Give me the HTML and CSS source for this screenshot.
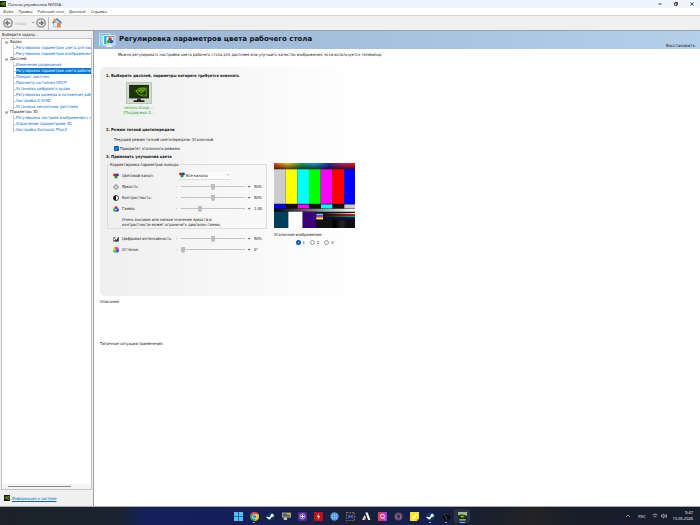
FILE: index.html
```html
<!DOCTYPE html>
<html lang="ru">
<head>
  <meta charset="UTF-8">
  <meta name="viewport" content="width=device-width, initial-scale=1.0">
  <title>Панель управления NVIDIA</title>
  <link rel="stylesheet" href="styles.css">
</head>
<body>
  <!-- shared icons -->
  <svg class="defs" width="0" height="0">
    <symbol id="eye" viewBox="0 0 12 12">
      <rect width="12" height="12" fill="#141a10"/>
      <path d="M1 6q4-5 8-1q-3 5-6 1q2-2 4 0" fill="none" stroke="#76b900" stroke-width="1.4"/>
      <path d="M7 2h4v8H6q4-1 4-4z" fill="#5a9400"/>
    </symbol>
    <symbol id="rgb" viewBox="0 0 12 12">
      <circle cx="3" cy="4" r="2.8" fill="#e02020"/>
      <circle cx="9" cy="4" r="2.8" fill="#2038d8"/>
      <circle cx="6" cy="8" r="3" fill="#10a030"/>
      <path d="M4 3l2 3 2-3z" fill="#111"/>
    </symbol>
    <symbol id="steam" viewBox="0 0 16 16">
      <circle cx="8" cy="8" r="7.500" fill="#10355c"/>
      <path d="M1 9l5 2.500 4-4" fill="none" stroke="#fff" stroke-width="2.500"/>
      <circle cx="11" cy="6" r="3" fill="#fff"/>
      <circle cx="6" cy="11.500" r="2" fill="#fff"/>
    </symbol>
    <symbol id="monitor" viewBox="0 0 24 20">
      <rect x="1" y="1" width="22" height="15" fill="#222"/>
      <rect x="2" y="2" width="20" height="13" fill="#1c340a"/>
      <path d="M9 9q5-6 12-5v10h-6q5-2 5-6z" fill="#4c7c0a"/>
      <path d="M8 8q5-5 11-3M9 8q3 6 8 4M11 8q3-3 6 0-2 3-4 1" fill="none" stroke="#7cc400" stroke-width="1"/>
      <path d="M10 16h4v2h4v2H6v-2h4z" fill="#222"/>
    </symbol>
  </svg>

  <header class="titlebar">
    <svg class="app-icon"><use href="#eye"/></svg>
    <span>Панель управления NVIDIA</span>
    <div class="window-buttons">
      <button aria-label="Свернуть"><svg viewBox="0 0 10 10"><path d="M1 5h8"/></svg></button>
      <button aria-label="Восстановить окно"><svg viewBox="0 0 10 10"><path d="M1 3h6v6H1zM3 3V1h6v6H7"/></svg></button>
      <button aria-label="Закрыть"><svg viewBox="0 0 10 10"><path d="M1 1l8 8M9 1l-8 8"/></svg></button>
    </div>
  </header>

  <nav class="menu">
    <a href="#">Файл</a>
    <a href="#">Правка</a>
    <a href="#">Рабочий стол</a>
    <a href="#">Дисплей</a>
    <a href="#">Справка</a>
  </nav>

  <div class="toolbar">
    <button class="tool" disabled>
      <svg viewBox="0 0 18 18"><circle cx="9" cy="9" r="7.500" fill="#f4f4f4" stroke="#8c8c8c" stroke-width="2.500"/><path d="M13 9H6M9 5L5 9l4 4" fill="none" stroke="#777" stroke-width="2.500"/></svg>
      <span>Назад</span>
      <i class="caret"></i>
    </button>
    <button class="tool" aria-label="Вперёд">
      <svg viewBox="0 0 18 18"><circle cx="9" cy="9" r="7.500" fill="#f4f4f4" stroke="#8c8c8c" stroke-width="2.500"/><path d="M5 9h7M9 5l4 4-4 4" fill="none" stroke="#777" stroke-width="2.500"/></svg>
    </button>
    <button class="tool home" aria-label="Домой">
      <svg viewBox="0 0 18 18"><path d="M3 8v8h12V8z" fill="#e8eef8" stroke="#7d97bd"/><path d="M1 9l8-7 8 7" fill="none" stroke="#5b87c5" stroke-width="3"/><circle cx="5" cy="4" r="3" fill="#e8a03c"/><path d="M9 9h6v8H9z" fill="#ee8a35"/></svg>
    </button>
  </div>

  <div class="workspace">
    <aside class="sidebar">
      <div class="sidebar-title">Выберите задачу...</div>
      <div class="tree">
        <div class="group">
          <div class="group-name">Видео</div>
          <ul>
            <li><a href="#">Регулировка параметров цвета для вид</a></li>
            <li><a href="#">Регулировка параметров изображения д</a></li>
          </ul>
        </div>
        <div class="group">
          <div class="group-name">Дисплей</div>
          <ul>
            <li><a href="#">Изменение разрешения</a></li>
            <li><a href="#" class="active">Регулировка параметров цвета рабочег</a></li>
            <li><a href="#">Поворот дисплея</a></li>
            <li><a href="#">Просмотр состояния HDCP</a></li>
            <li><a href="#">Установка цифрового аудио</a></li>
            <li><a href="#">Регулировка размера и положения рабо</a></li>
            <li><a href="#">Настройка G-SYNC</a></li>
            <li><a href="#">Установка нескольких дисплеев</a></li>
          </ul>
        </div>
        <div class="group">
          <div class="group-name">Параметры 3D</div>
          <ul>
            <li><a href="#">Регулировка настроек изображения с п</a></li>
            <li><a href="#">Управление параметрами 3D</a></li>
            <li><a href="#">Настройка Surround, PhysX</a></li>
          </ul>
        </div>
        <div class="tree-scroll"><i></i></div>
      </div>
      <div class="sidebar-footer">
        <svg><use href="#eye"/></svg>
        <a href="#">Информация о системе</a>
      </div>
    </aside>

    <main>
      <div class="page-head">
        <svg class="page-icon" viewBox="0 0 48 42">
          <rect x="1" y="2" width="30" height="32" fill="#4fb4dd" stroke="#e8f4fa" stroke-width="2"/>
          <path d="M4 5h8v26H4z" fill="#9be0f4"/>
          <rect x="13" y="7" width="32" height="26" rx="2" fill="#35a2d2" stroke="#eef3f6" stroke-width="3"/>
          <path d="M22 34h14l3 5H19z" fill="#e6e9ec"/>
          <rect x="21" y="11" width="20" height="19" fill="#f6f6f6"/>
          <circle cx="31" cy="17" r="5" fill="#e8202c"/>
          <circle cx="27" cy="24" r="5" fill="#18b43c"/>
          <circle cx="35" cy="24" r="5" fill="#2848d8"/>
        </svg>
        <h1>Регулировка параметров цвета рабочего стола</h1>
        <a href="#" class="restore">Восстановить</a>
      </div>
      <p class="intro">Можно регулировать настройки цвета рабочего стола для дисплеев или улучшить качество изображения, если используется телевизор.</p>

      <section class="panel">
        <h2>1. Выберите дисплей, параметры которого требуется изменить</h2>
        <button class="display">
          <span class="display-pic"><svg><use href="#monitor"/></svg></span>
          <span>Lenovo Group ...<br>[Поддержка G...</span>
        </button>

        <h2>2. Режим точной цветопередачи</h2>
        <p class="mode">Текущий режим точной цветопередачи: Эталонный</p>
        <label class="check"><input type="checkbox" checked> Приоритет эталонного режима</label>

        <h2>3. Применить улучшения цвета</h2>
        <div class="columns">
          <div class="controls">
            <fieldset>
              <legend>Корректировка параметров вывода</legend>
              <div class="row">
                <svg class="icon"><use href="#rgb"/></svg>
                <label for="channel">Цветовой канал:</label>
                <div class="select">
                  <svg class="icon"><use href="#rgb"/></svg>
                  <select id="channel"><option>Все каналы</option></select>
                  <svg class="arrow" viewBox="0 0 8 8"><path d="M1 2l3 3 3-3" fill="none" stroke="#888"/></svg>
                </div>
              </div>
              <div class="row">
                <svg class="icon" viewBox="0 0 12 12"><circle cx="6" cy="6" r="3" fill="#fff" stroke="#333"/><path d="M6 0v2M6 10v2M0 6h2M10 6h2M2 2l1 1M9 9l1 1M10 2L9 3M3 9l-1 1" stroke="#333"/></svg>
                <label for="brightness">Яркость:</label>
                <span>-</span><input type="range" id="brightness" value="50"><span>+</span><output>50%</output>
              </div>
              <div class="row">
                <svg class="icon" viewBox="0 0 12 12"><circle cx="6" cy="6" r="5" fill="#fff" stroke="#111" stroke-width="1.500"/><path d="M6 1a5 5 0 0 0 0 10z" fill="#111"/></svg>
                <label for="contrast">Контрастность:</label>
                <span>-</span><input type="range" id="contrast" value="50"><span>+</span><output>50%</output>
              </div>
              <div class="row">
                <svg class="icon" viewBox="0 0 12 12"><circle cx="6" cy="4" r="3.500" fill="#e8202c"/><circle cx="3.500" cy="8" r="3.500" fill="#18b43c"/><circle cx="8.500" cy="8" r="3.500" fill="#2848d8"/><circle cx="6" cy="7" r="1.500" fill="#fff"/></svg>
                <label for="gamma">Гамма:</label>
                <span>-</span><input type="range" id="gamma" value="28"><span>+</span><output>1.00</output>
              </div>
              <p class="note">Очень высокое или низкое значение яркости и контрастности может ограничить диапазон гаммы.</p>
            </fieldset>
            <div class="extra">
              <div class="row">
                <svg class="icon" viewBox="0 0 12 12"><path d="M1 2v9h10V2" fill="#fff" stroke="#222"/><path d="M2 10l3-4 2 2 4-7v9z" fill="#333"/><path d="M2 3h4M2 5h2" stroke="#222"/></svg>
                <label for="vibrance">Цифровая интенсивность:</label>
                <span>-</span><input type="range" id="vibrance" value="50"><span>+</span><output>50%</output>
              </div>
              <div class="row">
                <i class="icon hue-wheel"></i>
                <label for="hue">Оттенок:</label>
                <span>-</span><input type="range" id="hue" value="0"><span>+</span><output>0°</output>
              </div>
            </div>
          </div>

          <div class="preview">
            <svg class="test-card" viewBox="0 0 243 196" preserveAspectRatio="none">
              <defs>
                <linearGradient id="rainbow">
                  <stop offset="0" stop-color="#f04020"/><stop offset=".17" stop-color="#f0c020"/>
                  <stop offset=".34" stop-color="#20a050"/><stop offset=".5" stop-color="#20a0d0"/>
                  <stop offset=".68" stop-color="#3030a0"/><stop offset=".84" stop-color="#c02070"/>
                  <stop offset="1" stop-color="#f02020"/>
                </linearGradient>
                <linearGradient id="shade" x2="0" y2="1"><stop offset="0" stop-color="#000" stop-opacity="0"/><stop offset="1" stop-color="#000" stop-opacity=".7"/></linearGradient>
                <linearGradient id="gray"><stop offset="0" stop-color="#000"/><stop offset="1" stop-color="#fff"/></linearGradient>
                <linearGradient id="fade"><stop offset="0" stop-color="#111"/><stop offset="1" stop-color="#111" stop-opacity="0"/></linearGradient>
              </defs>
              <rect width="243" height="196" fill="#111"/>
              <rect width="243" height="19" fill="url(#rainbow)"/>
              <rect width="243" height="19" fill="url(#shade)"/>
              <path fill="#ccc" d="M0 19h35v104H0z"/>
              <path fill="#ff0" d="M35 19h35v104H35z"/>
              <path fill="#0ff" d="M70 19h35v104H70z"/>
              <path fill="#0f0" d="M105 19h35v104h-35z"/>
              <path fill="#f0f" d="M140 19h35v104h-35z"/>
              <path fill="#f00" d="M175 19h35v104h-35z"/>
              <path fill="#00f" d="M210 19h33v104h-33zM0 125h35v12H0z"/>
              <path fill="#f0f" d="M71 125h34v12H71z"/>
              <path fill="#0ff" d="M141 125h34v12h-34z"/>
              <path fill="#ccc" d="M211 125h32v12h-32z"/>
              <rect y="138" width="243" height="9" fill="url(#gray)"/>
              <path fill="#003f5c" d="M0 147h43v49H0z"/>
              <path fill="#fff" d="M43 147h43v49H43z"/>
              <path fill="#3a0078" d="M86 147h41v49H86z"/>
              <path fill="#0ff" d="M127 153h20v5h-20z"/>
              <path fill="#f0f" d="M127 158h20v6h-20z"/>
              <path fill="#ff0" d="M127 164h20v6h-20z"/>
              <path fill="#fff" d="M149 151h94v3h-94z"/>
              <path fill="#f00" d="M149 154h94v5h-94z"/>
              <path fill="#0c0" d="M149 159h94v4h-94z"/>
              <path fill="#00f" d="M149 163h94v4h-94z"/>
              <rect x="148" y="150" width="95" height="18" fill="url(#fade)"/>
              <path fill="#000" d="M176 172h12v24h-12z"/>
              <path fill="#222" d="M198 172h14v24h-14z"/>
            </svg>
            <div class="samples-title">Эталонное изображение:</div>
            <div class="samples">
              <label><input type="radio" name="sample" checked>1</label>
              <label><input type="radio" name="sample">2</label>
              <label><input type="radio" name="sample">3</label>
            </div>
          </div>
        </div>
      </section>

      <p class="description">Описание.</p>
      <p class="usage">Типичные ситуации применения.</p>
    </main>
  </div>

  <footer class="taskbar">
    <div class="apps">
      <button aria-label="Пуск"><svg viewBox="0 0 16 16"><path fill="#4cc2f5" d="M0 0h7.500v7.500H0zM8.500 0H16v7.500H8.500zM0 8.500h7.500V16H0zM8.500 8.500H16V16H8.500z"/></svg></button>
      <button aria-label="Chrome" class="running"><svg viewBox="0 0 16 16"><circle cx="8" cy="8" r="8" fill="#34a853"/><path d="M1 4a8 8 0 0 1 14 0L8 8z" fill="#ea4335"/><path d="M8 4h7.200A8 8 0 0 1 8 16l4-7z" fill="#fbbc05"/><circle cx="8" cy="8" r="4" fill="#fff"/><circle cx="8" cy="8" r="3" fill="#4285f4"/></svg></button>
      <button aria-label="Steam"><svg><use href="#steam"/></svg></button>
      <button aria-label="Экран"><svg viewBox="0 0 16 16"><path d="M0 1h16v9H0z" fill="#9a9e96"/><path d="M2 3h12v5H2z" fill="#54623a"/><path d="M3 10h6v4H3z" fill="#ccc"/><path d="M9 2h5v3H9z" fill="#dcb932"/></svg></button>
      <button aria-label="Запись"><svg viewBox="0 0 16 16"><rect width="16" height="16" rx="3" fill="#552a94"/><circle cx="8" cy="8" r="4.500" fill="none" stroke="#d6c4f4" stroke-width="1.500"/><path d="M8 5v6M5 8h6" stroke="#fff" stroke-width="1.500"/></svg></button>
      <button aria-label="Разгон"><svg viewBox="0 0 16 16"><rect width="16" height="16" fill="#c40d16"/><path d="M9 2L5 9h3l-1 5 4-7H8z" fill="#fff"/></svg></button>
      <button aria-label="Браузер"><svg viewBox="0 0 16 16"><circle cx="8" cy="8" r="7.500" fill="#4b8fd8"/><path d="M3 6h10M3 10h10M8 2v12M5 3q-3 5 0 10M11 3q3 5 0 10" fill="none" stroke="#9fccf4"/></svg></button>
      <button aria-label="Игра"><svg viewBox="0 0 16 16"><rect x="1" y="1" width="14" height="14" fill="#182344" stroke="#8c6748" stroke-width="2" stroke-dasharray="3 2"/><path d="M4 4l4 3 4-3v8L8 9l-4 3z" fill="#4864b8"/></svg></button>
      <button aria-label="Редактор"><svg viewBox="0 0 16 16"><path d="M6 1h4l5 13h-4z" fill="#fff"/><path d="M5 5l2 5-3 4H0z" fill="#e8ddd8"/><path d="M5 11l3 3H4z" fill="#e85030"/></svg></button>
      <button aria-label="Поиск"><svg viewBox="0 0 16 16"><defs><linearGradient id="pink"><stop offset="0" stop-color="#f23b48"/><stop offset="1" stop-color="#a238e8"/></linearGradient></defs><rect width="16" height="16" rx="1" fill="url(#pink)"/><circle cx="8" cy="7.500" r="3.500" fill="none" stroke="#fff" stroke-width="1.500"/><path d="M10 10l2 3" stroke="#fff" stroke-width="1.500"/></svg></button>
      <button aria-label="Сеть"><svg viewBox="0 0 16 16"><circle cx="8" cy="8" r="7" fill="#67506f"/><path d="M3 7h10M3 10h10" stroke="#b68ca8" stroke-width="1.500"/><circle cx="8" cy="8" r="3" fill="#382c4c"/></svg></button>
      <button aria-label="Заметки"><svg viewBox="0 0 16 16"><path d="M0 0h16v12l-4 4H0z" fill="#fee81c"/><path d="M5 8l2 3 5-7" fill="none" stroke="#fff" stroke-width="2"/><path d="M12 16v-4h4z" fill="#c9ae10"/></svg></button>
      <button aria-label="Библиотека" class="running"><svg><use href="#steam"/></svg></button>
      <button aria-label="Утилита" class="running"><svg viewBox="0 0 16 16"><circle cx="8" cy="8" r="7" fill="#0a0d10"/><path d="M2 4q8-3 11 2M3 6q5 0 5 8" fill="none" stroke="#46515a" stroke-width="1.500"/></svg></button>
      <button aria-label="Панель управления" class="running current"><svg viewBox="0 0 16 16"><path d="M0 0h16v16H0z" fill="#1c2818"/><path d="M0 0h16v7Q8 2 0 6z" fill="#9cba82"/><path d="M3 8q5-4 9 0-4 4-9 0z" fill="#76b900"/><path d="M2 13h12v2H2z" fill="#c8d0c0"/></svg></button>
    </div>
    <div class="tray">
      <svg viewBox="0 0 12 12"><path d="M2 8l4-4 4 4"/></svg>
      <span>РУС</span>
      <svg viewBox="0 0 12 12"><path d="M1 4q5-4 10 0M3 7q3-2 6 0M6 9v1"/></svg>
      <svg viewBox="0 0 12 12"><path d="M1 4h2l3-2v8L3 8H1zM8 4q2 2 0 4M10 2q3 4 0 8"/></svg>
      <div class="clock">9:47<br>15.05.2026</div>
    </div>
  </footer>
</body>
</html>
```
FILE: styles.css
```css
*,
*::before,
*::after {
  margin: 0;
  padding: 0;
  box-sizing: border-box;
}

body {
  height: 100vh;
  display: flex;
  flex-direction: column;
  overflow: hidden;
  font-family: "DejaVu Sans Condensed", "DejaVu Sans", sans-serif;
  font-size: 4px;
  line-height: 5px;
  color: #111;
  background: #fff;
}

button,
input,
select {
  font: inherit;
  color: inherit;
  border: none;
  background: none;
}

a {
  color: inherit;
  text-decoration: none;
}

svg {
  display: block;
}

.defs {
  position: absolute;
}

/* window chrome */
.titlebar {
  display: flex;
  align-items: center;
  gap: 2px;
  height: 8px;
  background: #eff3fb;
  font-family: "Open Sans", sans-serif;
}

.app-icon {
  width: 6px;
  height: 6px;
}

.window-buttons {
  margin-left: auto;
  display: flex;
}

.window-buttons button {
  width: 16px;
  display: flex;
  justify-content: center;
}

.window-buttons svg {
  width: 4px;
  height: 4px;
  fill: none;
  stroke: #222;
  stroke-width: 2;
}

.menu {
  display: flex;
  align-items: center;
  gap: 5px;
  height: 8px;
  padding-left: 3px;
  border-bottom: 1px solid #d6d6d6;
  font-family: "Open Sans", sans-serif;
}

.toolbar {
  display: flex;
  align-items: center;
  height: 15px;
  padding-left: 3px;
  background: #f0f0f0;
  border-bottom: 1px solid #a0a0a0;
}

.tool {
  display: flex;
  align-items: center;
  gap: 2px;
  color: #b0b0b0;
}

.tool svg {
  width: 10px;
  height: 10px;
}

.caret {
  margin: 0 2px 0 3px;
  border: 1px solid transparent;
  border-top-color: #444;
}

.home {
  margin-left: 2px;
  padding-left: 3px;
  height: 13px;
  border-left: 1px solid #bbb;
}

.workspace {
  flex: 1;
  min-height: 0;
  display: flex;
}

/* task tree */
.sidebar {
  width: 94px;
  flex: none;
  display: flex;
  flex-direction: column;
  background: #f0f0f0;
  border-right: 1px solid #a0a0a0;
}

.sidebar-title {
  padding: 1px 0 1px 2px;
}

.tree {
  flex: 1;
  display: flex;
  flex-direction: column;
  margin: 0 1px;
  background: #fff;
  border: 1px solid #c4c4c4;
  overflow: hidden;
  line-height: 6px;
  white-space: nowrap;
}

.group {
  margin: 0 0 -1px 3px;
}

.group-name {
  display: flex;
  align-items: center;
  gap: 2px;
}

.group-name::before {
  content: "";
  width: 3px;
  height: 3px;
  background: #888;
  border: 1px solid #c4c4c4;
}

.group ul {
  margin-left: 8px;
  list-style: none;
  border-left: 1px solid #ccc;
}

.group li {
  display: flex;
  align-items: center;
}

.group li::before {
  content: "";
  width: 2px;
  flex: none;
  border-top: 1px solid #ccc;
}

.group a {
  flex: 1;
  color: #0066cc;
}

.group a.active {
  background: #0078d7;
  color: #fff;
}

.tree-scroll {
  margin-top: auto;
  padding: 2px 20px 2px 6px;
  background: #f4f4f4;
}

.tree-scroll i {
  display: block;
  height: 1px;
  background: #888;
}

.sidebar-footer {
  display: flex;
  align-items: center;
  gap: 2px;
  height: 16px;
  padding-left: 4px;
}

.sidebar-footer svg {
  width: 6px;
  height: 6px;
}

.sidebar-footer a {
  color: #0066cc;
  text-decoration: underline;
}

/* page */
main {
  flex: 1;
  min-width: 0;
}

.page-head {
  display: flex;
  align-items: center;
  gap: 3px;
  height: 18px;
  padding: 0 5px;
  background: linear-gradient(90deg, #9ab5d6, #b3cfea);
}

.page-icon {
  width: 17px;
  height: 15px;
}

.page-head h1 {
  font-family: "DejaVu Sans", sans-serif;
  font-size: 7px;
  line-height: 16px;
  align-self: flex-start;
}

.restore {
  margin-left: auto;
  align-self: flex-end;
  font-family: "DejaVu Sans", sans-serif;
  line-height: 7px;
}

.intro {
  padding: 3px 24px 0;
}

.panel {
  max-width: 261px;
  margin: 10px 0 0 6px;
  padding: 6px 0 41px 6px;
  border-radius: 5px 0 0 5px;
  background: linear-gradient(90deg, #efefef, #fff);
}

h2 {
  font-size: 4px;
  line-height: 5px;
}

.display {
  display: flex;
  flex-direction: column;
  align-items: center;
  width: 66px;
  margin: 4px 0 12px;
  color: #1ba81b;
}

.display-pic {
  padding: 1px;
  margin-bottom: 1px;
  background: #d0dccf;
  border: 1px solid #b4c8b4;
}

.display-pic svg {
  width: 22px;
  height: 18px;
}

.mode {
  margin: 5px 8px 4px;
}

.check {
  display: flex;
  align-items: center;
  gap: 1px;
  margin: 0 8px 3px;
}

.check input {
  appearance: none;
  width: 5px;
  height: 5px;
  border-radius: 1px;
  background: #005fb8;
}

.check input:checked::before {
  content: "✓";
  display: block;
  line-height: 5px;
  text-align: center;
  color: #fff;
}

.columns {
  display: flex;
  align-items: flex-start;
  gap: 7px;
  padding-top: 3px;
}

.controls {
  flex: 0 1 161px;
}

fieldset {
  margin-left: 1px;
  padding: 3px 0 1px 5px;
  border: 1px solid #ddd;
}

legend {
  padding: 0 1px;
  margin-left: -4px;
}

.row {
  display: grid;
  grid-template-columns: 9px 54px 5px 64px 8px 1fr;
  align-items: center;
  height: 11px;
  white-space: nowrap;
}

.icon {
  width: 6px;
  height: 6px;
}

.hue-wheel {
  border-radius: 50%;
  background: conic-gradient(#f33, #f3f, #33f, #3cf, #3c3, #fe3, #f33);
}

.row span {
  text-align: center;
}

.row span:first-of-type {
  text-align: left;
}

.row output {
  padding-left: 1px;
}

.select {
  grid-column: 3 / 5;
  display: flex;
  align-items: center;
  width: 53px;
  height: 8px;
  margin-left: 2px;
  padding: 0 1px;
  background: #fbfbfb;
  border-bottom: 1px solid #ddd;
}

.select select {
  flex: 1;
  appearance: none;
  padding-left: 1px;
}

.arrow {
  width: 4px;
  height: 4px;
}

input[type="range"] {
  appearance: none;
  width: 100%;
  height: 6px;
  background: linear-gradient(#c4c4c4, #c4c4c4) center / 100% 1px no-repeat;
}

input[type="range"]::-webkit-slider-thumb {
  appearance: none;
  width: 4px;
  height: 6px;
  border-radius: 0 0 2px 2px;
  background: #bdbdbd;
}

.note {
  width: 110px;
  margin: 3px 0 0 9px;
}

.extra {
  padding: 4px 0 0 7px;
}

.preview {
  flex: 1;
  padding: 1px 6px 0 0;
}

.test-card {
  width: 100%;
  height: 65px;
}

.samples-title {
  margin-top: 4px;
}

.samples {
  display: flex;
  justify-content: center;
  gap: 5px;
  margin-top: 3px;
}

.samples label {
  display: flex;
  align-items: center;
  gap: 2px;
}

.samples input {
  appearance: none;
  width: 5px;
  height: 5px;
  border: 1px solid #999;
  border-radius: 50%;
  background: #fff;
}

.samples input:checked {
  border: 2px solid #005fb8;
}

.description {
  margin: 3px 6px 37px;
}

.usage {
  margin: 0 6px;
}

/* taskbar */
.taskbar {
  display: grid;
  grid-template-columns: 1fr auto 1fr;
  align-items: center;
  height: 19px;
  border-top: 1px solid #aaa;
  background: linear-gradient(90deg, #1b2229 0, #1a2330 17%, #13205c 21%, #141f58 35%, #1a2038 50%, #141f4c 60%, #181f30 68%, #232325 76%, #181d2a 83%, #161d2b 100%);
  color: #fff;
  font-family: "Open Sans", sans-serif;
}

.apps {
  grid-column: 2;
  display: flex;
}

.apps button {
  width: 16px;
  height: 14px;
  display: flex;
  flex-direction: column;
  align-items: center;
  padding-top: 3px;
}

.apps svg {
  width: 9px;
  height: 9px;
  flex: none;
}

.apps .running::after {
  content: "";
  width: 2px;
  height: 1px;
  margin-top: 1px;
  background: #aab;
}

.apps .current {
  background: #2b3346;
  border-radius: 2px;
}

.apps .current::after {
  width: 5px;
  background: #4cc2ff;
}

.tray {
  display: flex;
  align-items: center;
  justify-content: flex-end;
  gap: 3px;
  padding-right: 7px;
}

.tray svg {
  width: 6px;
  height: 6px;
  fill: none;
  stroke: #fff;
}

.tray svg:first-child {
  margin-right: 4px;
}

.tray span {
  margin-right: 3px;
}

.clock {
  margin-left: 3px;
  line-height: 6px;
  text-align: right;
}
```
